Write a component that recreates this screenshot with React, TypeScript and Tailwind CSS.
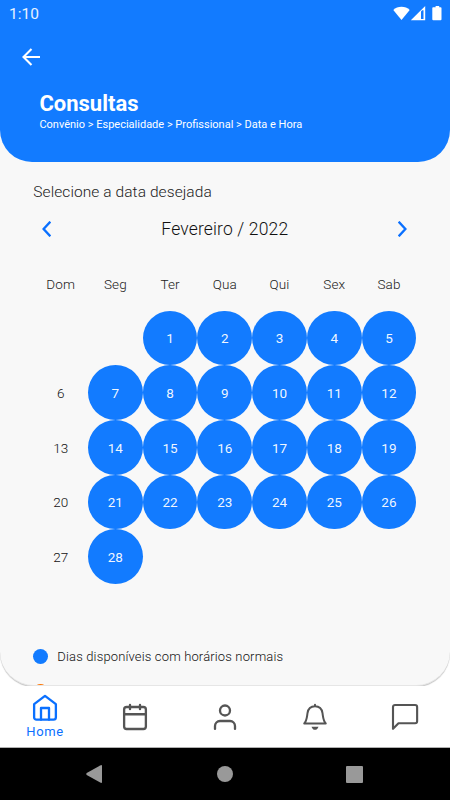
import React from "react";

const weekDays = ["Dom", "Seg", "Ter", "Qua", "Qui", "Sex", "Sab"];
const firstWeekDay = 2;
const daysInMonth = 28;

const StatusBar: React.FC = () => (
  <div className="flex h-7 items-center justify-between pl-[9px] pr-2 text-white">
    <span className="text-[15.5px] leading-7 text-white/90">1:10</span>
    <svg width="50" height="16" viewBox="0 0 50 16" fill="currentColor">
      <path d="M1.3 4C5.3-0.3 13.7-0.3 17.7 4L9.5 14Z" />
      <path fillRule="evenodd" d="M18.8 14.3L33.2 0V14.3ZM29 5.5V13H31.5V4.3L30.2 4.3Z" />
      <path d="M43.6 0h3.6v1.2h1.4q0.9 0 0.9 0.9V13.3q0 0.9-0.9 0.9h-7.4q-0.9 0-0.9-0.9V2.1q0-0.9 0.9-0.9h2.4z" />
    </svg>
  </div>
);

const Header: React.FC = () => (
  <header className="h-[162px] shrink-0 rounded-b-[32px] bg-[#127bff] text-white">
    <StatusBar />
    <button className="mt-5 ml-[22px] block" aria-label="Voltar">
      <svg width="18" height="18" viewBox="0 0 18 18" fill="none" stroke="currentColor" strokeWidth="2.1">
        <path d="M18 9H1.5M9.5 1L1.5 9L9.5 17" />
      </svg>
    </button>
    <div className="pl-[39.4px] pt-[24px]">
      <h1 className="text-[22px] font-bold leading-[27px]">Consultas</h1>
      <p className="whitespace-nowrap text-[11px] leading-[15px]">
        Convênio &gt; Especialidade &gt; Profissional &gt; Data e Hora
      </p>
    </div>
  </header>
);

const Calendar: React.FC = () => {
  const days = Array.from({ length: daysInMonth }, (_, i) => i + 1);

  return (
    <section>
      <div className="flex h-8 items-center justify-between pl-[9px] pr-[9px] text-[#0a70ff]">
        <svg width="9" height="16" viewBox="0 0 9 16" fill="none" stroke="currentColor" strokeWidth="2.3">
          <path d="M8.3 0.7L1.6 8L8.3 15.3" />
        </svg>
        <h2 className="text-[17.5px] font-light tracking-[0.15px] text-[#111]">Fevereiro / 2022</h2>
        <svg width="9" height="16" viewBox="0 0 9 16" fill="none" stroke="currentColor" strokeWidth="2.3">
          <path d="M0.7 0.7L7.4 8L0.7 15.3" />
        </svg>
      </div>
      <div className="mt-[28.5px] grid grid-cols-7 text-center text-[13.5px] font-light leading-5 tracking-[0.1px] text-[#222]">
        {weekDays.map((day) => (
          <span key={day}>{day}</span>
        ))}
      </div>
      <div className="mt-[17px] grid auto-rows-[54.7px] grid-cols-7 text-[13.5px]">
        {Array.from({ length: firstWeekDay }, (_, i) => (
          <span key={`empty-${i}`} />
        ))}
        {days.map((day) => {
          const isSunday = (day + firstWeekDay - 1) % 7 === 0;
          return (
            <span
              key={day}
              className={
                isSunday
                  ? "flex items-center justify-center pt-px font-light text-[#111]"
                  : "flex items-center justify-center rounded-full bg-[#127bff] pt-px text-white/95"
              }
            >
              {day}
            </span>
          );
        })}
      </div>
    </section>
  );
};

const iconProps = {
  width: 30,
  height: 30,
  viewBox: "0 0 24 24",
  fill: "none",
  stroke: "currentColor",
  strokeWidth: 1.85,
  strokeLinecap: "round",
  strokeLinejoin: "round",
} as const;

const TabBar: React.FC = () => (
  <nav className="grid h-[61px] shrink-0 grid-cols-5 bg-white text-[#555]">
    <a className="flex flex-col items-center pt-[7px] text-[#0a70ff]">
      <svg {...iconProps}>
        <path d="M3.3 8.9L12 2.3L20.7 8.9V19.4C20.7 20.5 19.9 21.3 18.8 21.3H5.2C4.1 21.3 3.3 20.5 3.3 19.4Z" />
        <path d="M8.8 21.3V12H15.2V21.3" />
      </svg>
      <span className="text-[13px] leading-[18px] tracking-[0.6px]">Home</span>
    </a>
    <a className="flex items-center justify-center">
      <svg {...iconProps}>
        <rect x="3.3" y="4" width="17.4" height="17.6" rx="2" />
        <path d="M8 2.3v3.4M16 2.3v3.4M3.3 9.8h17.4" />
      </svg>
    </a>
    <a className="flex items-center justify-center">
      <svg {...iconProps}>
        <path d="M20 21.5v-2.3a4 4 0 0 0-4-4H8a4 4 0 0 0-4 4v2.3" />
        <circle cx="12" cy="6.8" r="4" />
      </svg>
    </a>
    <a className="flex items-center justify-center">
      <svg {...iconProps} strokeWidth={1.6}>
        <path d="M12 2.2V3M3.4 17.2H20.6C18.6 15 18.6 13 18 8.9C17.5 5.3 15 3.4 12 3.4S6.5 5.3 6 8.9C5.4 13 5.4 15 3.4 17.2Z" />
        <path d="M9.2 19.7H14.8Q14 22.2 12 22.2T9.2 19.7Z" fill="currentColor" stroke="none" />
      </svg>
    </a>
    <a className="flex items-center justify-center">
      <svg {...iconProps} strokeWidth={1.7}>
        <path d="M21.7 15.4a1.6 1.6 0 0 1-1.6 1.6H6.8l-4.4 4.4V4a1.6 1.6 0 0 1 1.6-1.6h16.1a1.6 1.6 0 0 1 1.6 1.6z" />
      </svg>
    </a>
  </nav>
);

const SystemBar: React.FC = () => (
  <div className="grid h-[53px] shrink-0 grid-cols-[94px_94px_74px_94px_94px] border-t border-[#b0b0b0] bg-black text-[#999]">
    <span />
    <svg className="-ml-[9px] self-center" width="18" height="20" viewBox="0 0 18 20" fill="currentColor">
      <path d="M15.2 1.4Q17 0.5 17 2V18Q17 19.5 15.2 18.6L1.7 11Q0.7 10 1.7 9Z" />
    </svg>
    <span className="size-4 place-self-center rounded-full bg-[#999]" />
    <span className="ml-[84px] size-[17px] self-center rounded-[1px] bg-[#999]" />
  </div>
);

const App: React.FC = () => {
  return (
    <div className="flex h-[800px] w-[450px] flex-col overflow-hidden bg-white font-['Roboto',sans-serif]">
      <div className="flex h-[686px] shrink-0 flex-col overflow-hidden rounded-b-[34px] border-b border-[#e6e6e6] bg-[#f8f8f8] shadow-[0_1px_1px_#c4c4c4]">
        <Header />
        <main className="pl-[33.3px] pr-[33.7px] pt-[19px]">
          <p className="text-[15.5px] font-light leading-[22px] tracking-[0.08px] text-[#222]">Selecione a data desejada</p>
          <div className="mt-[10px]">
            <Calendar />
          </div>
          <ul className="mt-[63px] space-y-[14.5px] text-[13px] font-light leading-5 tracking-[0.15px] text-[#111]">
            <li className="flex items-center gap-[9px]">
              <span className="size-[15px] rounded-full bg-[#127bff]" />
              Dias disponíveis com horários normais
            </li>
            <li className="flex h-5 items-center">
              <span className="size-[15px] rounded-full bg-[#ff7500]" />
            </li>
          </ul>
        </main>
      </div>
      <TabBar />
      <SystemBar />
    </div>
  );
};

export default App;
